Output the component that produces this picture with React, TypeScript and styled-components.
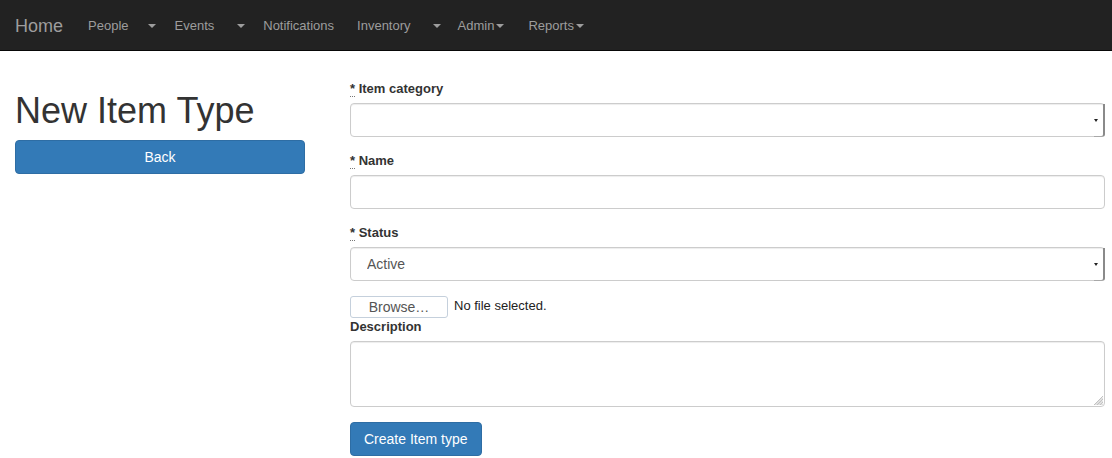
import React from 'react';
import styled, { createGlobalStyle } from 'styled-components';

const GlobalStyle = createGlobalStyle`
    html, body {
        margin: 0;
        padding: 0;
        background: #fff;
    }
    body {
        font-family: "Liberation Sans", Arial, sans-serif;
        font-size: 14px;
        line-height: 1.42857143;
        color: #333;
    }
    * {
        box-sizing: border-box;
    }
`;

const Navbar = styled.nav`
    height: 51px;
    background: #222;
    border-bottom: 1px solid #080808;
    display: flex;
    align-items: stretch;
    margin-bottom: 20px;
`;

const Brand = styled.a`
    display: block;
    padding: 16px 15px 14px;
    height: 50px;
    font-size: 18px;
    line-height: 20px;
    color: #9d9d9d;
    text-decoration: none;
`;

const NavList = styled.ul`
    display: flex;
    list-style: none;
    margin: 0;
    padding: 0;
`;

const NavItem = styled.li<{ $gap?: number }>`
    display: flex;
    margin-left: ${p => p.$gap || 0}px;
`;

const NavLink = styled.a<{ $pl?: number; $pr?: number }>`
    display: flex;
    align-items: center;
    padding: 16px ${p => p.$pr ?? 10}px 14px ${p => p.$pl ?? 10}px;
    font-size: 13px;
    line-height: 20px;
    color: #9d9d9d;
    text-decoration: none;
    white-space: nowrap;
`;

const Caret = styled.span<{ $ml?: number }>`
    display: inline-block;
    width: 0;
    height: 0;
    margin-left: ${p => p.$ml ?? 0}px;
    border-top: 4px solid #9d9d9d;
    border-left: 4px solid transparent;
    border-right: 4px solid transparent;
`;

const Main = styled.div`
    display: grid;
    grid-template-columns: 290px 1fr;
    column-gap: 45px;
    padding: 0 7px 0 15px;
`;

const Side = styled.div`
    display: flex;
    flex-direction: column;
`;

const Title = styled.h1`
    margin: 20px 0 9px;
    font-size: 36px;
    font-weight: 500;
    line-height: 1.1;
    color: #333;
`;

const Button = styled.button<{ $block?: boolean }>`
    display: ${p => (p.$block ? 'block' : 'inline-block')};
    width: ${p => (p.$block ? '100%' : 'auto')};
    height: 34px;
    padding: 6px 13px;
    font-family: inherit;
    font-size: 14px;
    line-height: 20px;
    color: #fff;
    background: #337ab7;
    border: 1px solid #2e6da4;
    border-radius: 4px;
    cursor: pointer;
`;

const Form = styled.form`
    padding-top: 8px;
    display: flex;
    flex-direction: column;
    align-items: stretch;
`;

const Group = styled.div<{ $mb?: number }>`
    margin-bottom: ${p => p.$mb ?? 15}px;
`;

const Label = styled.label`
    display: block;
    margin-bottom: 4px;
    font-size: 13px;
    font-weight: bold;
    line-height: 20px;
`;

const Required = styled.abbr`
    text-decoration: none;
    border-bottom: 1px dotted #777;
    cursor: help;
`;

const Control = styled.input`
    display: block;
    width: 100%;
    height: 34px;
    padding: 6px 12px;
    font-family: inherit;
    font-size: 14px;
    color: #555;
    background: #fff;
    border: 1px solid #ccc;
    border-radius: 4px;
    box-shadow: inset 0 1px 1px rgba(0, 0, 0, 0.075);
`;

const SelectWrap = styled.div`
    position: relative;
`;

const Select = styled.select`
    display: block;
    width: 100%;
    height: 34px;
    padding: 6px 12px 6px 16px;
    font-family: inherit;
    font-size: 14px;
    color: #555;
    background: #fff;
    border: 1px solid #ccc;
    border-radius: 4px;
    box-shadow: inset 0 1px 1px rgba(0, 0, 0, 0.075);
    appearance: none;
    -webkit-appearance: none;
`;

const SelectButton = styled.span`
    position: absolute;
    top: 1px;
    right: 0;
    bottom: 0;
    width: 11px;
    border-right: 2px solid #8a8a8a;
    border-bottom: 1px solid #a8a8a8;
    border-bottom-right-radius: 3px;
    pointer-events: none;
    display: flex;
    align-items: center;
    justify-content: flex-start;

    &::after {
        content: '';
        width: 0;
        height: 0;
        border-top: 3px solid #222;
        border-left: 2.5px solid transparent;
        border-right: 2.5px solid transparent;
    }
`;

const FileRow = styled.div`
    display: flex;
    align-items: center;
    gap: 6px;
    height: 21px;
`;

const BrowseButton = styled.span`
    display: inline-flex;
    align-items: center;
    justify-content: center;
    width: 98px;
    height: 22px;
    font-size: 14px;
    color: #555;
    background: #fff;
    border: 1px solid #c5d0dc;
    border-radius: 3px;
`;

const FileText = styled.span`
    font-size: 13px;
    color: #222;
`;

const AreaWrap = styled.div`
    position: relative;
`;

const TextArea = styled.textarea`
    display: block;
    width: 100%;
    height: 66px;
    padding: 6px 12px;
    font-family: inherit;
    font-size: 14px;
    color: #555;
    border: 1px solid #ccc;
    border-radius: 4px;
    box-shadow: inset 0 1px 1px rgba(0, 0, 0, 0.075);
    resize: none;
`;

const Grip = styled.svg`
    position: absolute;
    right: 2px;
    bottom: 2px;
    width: 10px;
    height: 10px;
`;

const Actions = styled.div`
    margin-top: 0;
`;

const navItems = [
    { label: 'People', split: true, gap: 0, caretPl: 9, caretPr: 9 },
    { label: 'Events', split: true, gap: 0, caretPl: 13, caretPr: 8 },
    { label: 'Notifications', split: false, gap: 0, caretPl: 0, caretPr: 0 },
    { label: 'Inventory', split: true, gap: 3, caretPl: 12, caretPr: 7 },
];

const App = () => {
    return (
        <>
            <GlobalStyle />
            <Navbar>
                <Brand href="#">Home</Brand>
                <NavList>
                    {navItems.map(item => (
                        <React.Fragment key={item.label}>
                            <NavItem $gap={item.gap}>
                                <NavLink href="#">{item.label}</NavLink>
                            </NavItem>
                            {item.split && (
                                <NavItem>
                                    <NavLink href="#" $pl={item.caretPl} $pr={item.caretPr}><Caret /></NavLink>
                                </NavItem>
                            )}
                        </React.Fragment>
                    ))}
                    <NavItem>
                        <NavLink href="#">Admin<Caret $ml={2} /></NavLink>
                    </NavItem>
                    <NavItem $gap={4}>
                        <NavLink href="#">Reports<Caret $ml={2} /></NavLink>
                    </NavItem>
                </NavList>
            </Navbar>
            <Main>
                <Side>
                    <Title>New Item Type</Title>
                    <Button type="button" $block>Back</Button>
                </Side>
                <Form onSubmit={e => e.preventDefault()}>
                    <Group $mb={14}>
                        <Label><Required title="required">*</Required> Item category</Label>
                        <SelectWrap>
                            <Select defaultValue="">
                                <option value=""></option>
                            </Select>
                            <SelectButton />
                        </SelectWrap>
                    </Group>
                    <Group $mb={14}>
                        <Label><Required title="required">*</Required> Name</Label>
                        <Control type="text" />
                    </Group>
                    <Group $mb={15}>
                        <Label><Required title="required">*</Required> Status</Label>
                        <SelectWrap>
                            <Select defaultValue="active">
                                <option value="active">Active</option>
                                <option value="inactive">Inactive</option>
                            </Select>
                            <SelectButton />
                        </SelectWrap>
                    </Group>
                    <FileRow>
                        <BrowseButton>Browse…</BrowseButton>
                        <FileText>No file selected.</FileText>
                    </FileRow>
                    <Group $mb={15}>
                        <Label>Description</Label>
                        <AreaWrap>
                            <TextArea />
                            <Grip viewBox="0 0 10 10">
                                <path d="M10 1 L1 10 M10 4 L4 10 M10 7 L7 10 M10 2.5 L2.5 10 M10 5.5 L5.5 10 M10 8.5 L8.5 10" stroke="#999" strokeWidth="0.6" />
                            </Grip>
                        </AreaWrap>
                    </Group>
                    <Actions>
                        <Button type="submit">Create Item type</Button>
                    </Actions>
                </Form>
            </Main>
        </>
    );
};

export default App;
